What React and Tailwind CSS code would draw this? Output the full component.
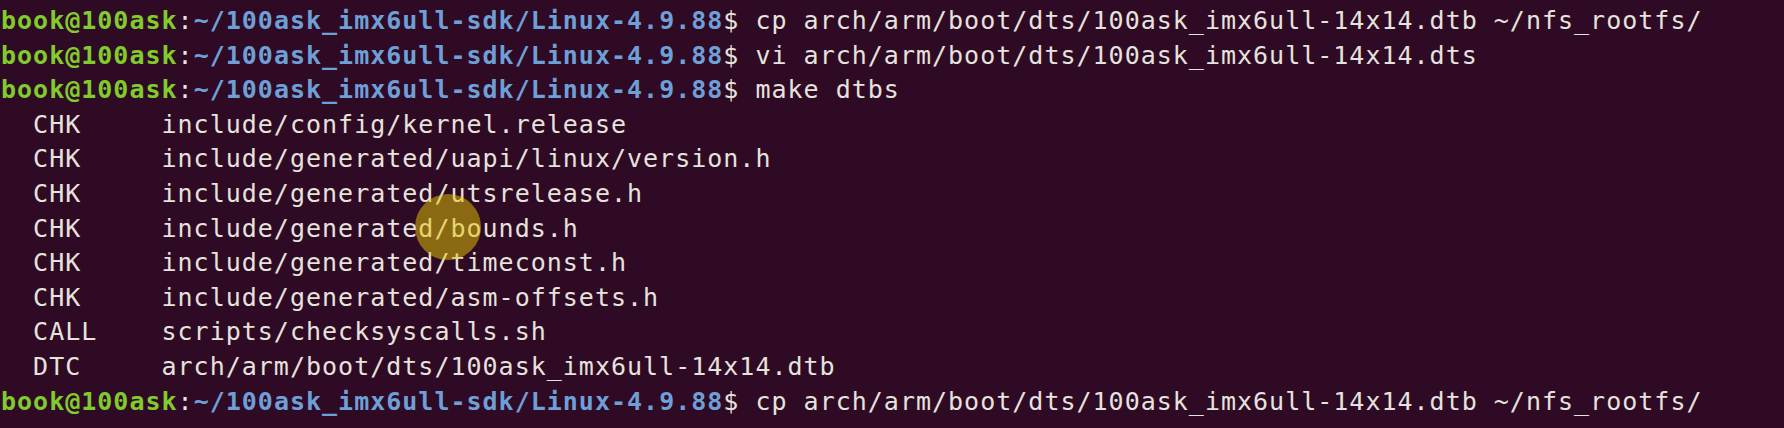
import React from 'react';

// 터미널 한 줄: 프롬프트 + 명령
const Prompt = ({ cmd }) => (
  <div className="whitespace-pre">
    <span className="font-bold text-[#80cc2c]">book@100ask</span>
    <span className="text-[#e6e2de]">:</span>
    <span className="font-bold text-[#6e9fd6]">~/100ask_imx6ull-sdk/Linux-4.9.88</span>
    <span className="text-[#e6e2de]">$ {cmd}</span>
  </div>
);

const Out = ({ tag, path }) => (
  <div className="whitespace-pre text-[#e6e2de]">{`  ${tag.padEnd(7, ' ')} ${path}`}</div>
);

export default function App() {
  const outputs = [
    ['CHK', 'include/config/kernel.release'],
    ['CHK', 'include/generated/uapi/linux/version.h'],
    ['CHK', 'include/generated/utsrelease.h'],
    ['CHK', 'include/generated/bounds.h'],
    ['CHK', 'include/generated/timeconst.h'],
    ['CHK', 'include/generated/asm-offsets.h'],
    ['CALL', 'scripts/checksyscalls.sh'],
    ['DTC', 'arch/arm/boot/dts/100ask_imx6ull-14x14.dtb'],
  ];

  return (
    <div className="relative w-[1784px] h-[428px] overflow-hidden bg-[#2f0a24]">
      <div className="mt-[4px] pl-[1px] font-['DejaVu_Sans_Mono',monospace] text-[25px] leading-[34.6px] tracking-[1px]">
        <Prompt cmd="cp arch/arm/boot/dts/100ask_imx6ull-14x14.dtb ~/nfs_rootfs/" />
        <Prompt cmd="vi arch/arm/boot/dts/100ask_imx6ull-14x14.dts" />
        <Prompt cmd="make dtbs" />
        {outputs.map(([t, p], i) => (
          <Out key={i} tag={t} path={p} />
        ))}
        <Prompt cmd="cp arch/arm/boot/dts/100ask_imx6ull-14x14.dtb ~/nfs_rootfs/" />
      </div>
      {/* 마우스 커서 하이라이트 */}
      <div className="absolute left-[415px] top-[194px] w-[66px] h-[66px] rounded-full bg-[#e6c800]/50" />
    </div>
  );
}
